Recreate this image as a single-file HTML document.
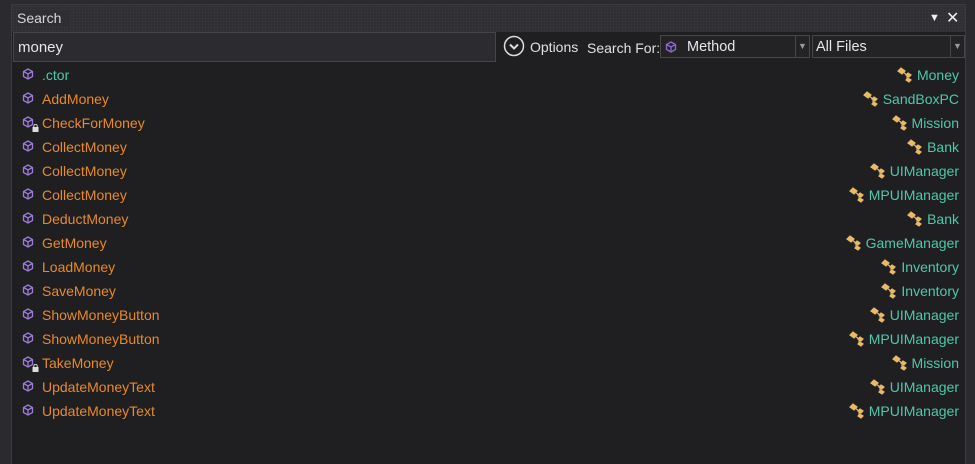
<!DOCTYPE html>
<html><head><meta charset="utf-8"><style>
*{margin:0;padding:0;box-sizing:border-box}
body{width:975px;height:456px;background:#2b2b2f;font-family:"Liberation Sans",sans-serif;position:relative;overflow:hidden}
#panel{position:absolute;left:11px;top:4px;width:955px;height:460px;background:#1f1f22;border:1px solid #3a3a3f;border-bottom:none}
#title{position:absolute;left:0;top:0;width:953px;height:27px;background:#2e2e33;
background-image:radial-gradient(#36363b 0.8px,transparent 0.9px);background-size:3px 3px}
#title span{position:absolute;left:5px;top:5px;color:#d8d8d8;font-size:14px;background:#2e2e33;padding-right:8px}
#title .ctl{position:absolute;top:3px;color:#eee;font-size:16px}
#search{position:absolute;left:1px;top:27px;width:483px;height:30px;background:#2c2c30;border:1px solid #45454a;color:#e6e6e6;font-size:15px;padding:6px 4px}
.lbl{position:absolute;color:#e0e0e0;font-size:14px}
.combo{position:absolute;top:30px;height:23px;background:#232326;border:1px solid #46464b;color:#e6e6e6;font-size:14.5px}
.combo .arr{position:absolute;right:0;top:0;width:14px;height:21px;border-left:1px solid #46464b;color:#999;font-size:9px;text-align:center;line-height:21px}
.row{position:absolute;left:0;width:953px;height:24px;font-size:14px}
.row .n{position:absolute;left:30px;top:4px;color:#e8892a}
.row .c{position:absolute;right:6px;top:4px;color:#4ec9a8}
.row .mi{position:absolute;left:10px;top:5px}
.row .ci{position:absolute;top:4px}
</style></head><body>
<div id="panel">
<div id="title"><span>Search</span><div class="ctl" style="left:917px;font-size:11px;top:7px">▼</div><div class="ctl" style="left:934px">✕</div></div>
<div id="search">money</div>
<svg style="position:absolute;left:491px;top:30px" width="22" height="22"><circle cx="11" cy="11" r="9.5" fill="none" stroke="#ddd" stroke-width="1.5"/><path d="M7 9.5l4 4 4-4" fill="none" stroke="#ddd" stroke-width="2"/></svg>
<div class="lbl" style="left:518px;top:34px">Options</div>
<div class="lbl" style="left:575px;top:35px">Search For:</div>
<div class="combo" style="left:648px;width:150px"><svg style="position:absolute;left:4px;top:5px" width="12" height="12"><path d="M6 1l4.5 2.5v5L6 11 1.5 8.5v-5z M1.5 3.5L6 6l4.5-2.5M6 6v5" fill="none" stroke="#8e6bd0" stroke-width="1.3"/></svg><span style="position:absolute;left:26px;top:3px">Method</span><div class="arr">▼</div></div>
<div class="combo" style="left:800px;width:153px"><span style="position:absolute;left:3px;top:3px">All Files</span><div class="arr">▼</div></div>
<div id="rows"></div>
</div>
<script>
var d=[[".ctor","Money",0],["AddMoney","SandBoxPC",0],["CheckForMoney","Mission",1],["CollectMoney","Bank",0],["CollectMoney","UIManager",0],["CollectMoney","MPUIManager",0],["DeductMoney","Bank",0],["GetMoney","GameManager",0],["LoadMoney","Inventory",0],["SaveMoney","Inventory",0],["ShowMoneyButton","UIManager",0],["ShowMoneyButton","MPUIManager",0],["TakeMoney","Mission",1],["UpdateMoneyText","UIManager",0],["UpdateMoneyText","MPUIManager",0]];
var h="";
var cv=document.createElement("canvas").getContext("2d");cv.font="14px 'Liberation Sans'";
d.forEach(function(r,i){
var w=cv.measureText(r[1]).width;
var mi='<svg class="mi" width="12" height="12"><path d="M6 1l4.5 2.5v5L6 11 1.5 8.5v-5z M1.5 3.5L6 6l4.5-2.5M6 6v5" fill="none" stroke="#9b7bd8" stroke-width="1.3"/></svg>';
if(r[2])mi+='<svg style="position:absolute;left:20px;top:13px" width="7" height="8"><rect x="0.5" y="3" width="6" height="5" fill="#ddd"/><path d="M1.8 3.5V2a1.7 1.7 0 0 1 3.4 0v1.5" fill="none" stroke="#ddd"/></svg>';
var ci='<svg class="ci" style="right:'+(w+8)+'px" width="18" height="16"><path d="M1 4l3-3 4 3-3 3z M9 8l2-2 3 2-2 2z M9 13l2-2 3 2-2 2z M6 5l4 3M10 9v3" fill="#e8b96a" stroke="#e8b96a" stroke-width="1.2"/></svg>';
h+='<div class="row" style="top:'+(58+i*24)+'px">'+mi+'<span class="n"'+(i==0?' style="color:#4ec9a8"':'')+'>'+r[0]+'</span>'+ci+'<span class="c">'+r[1]+'</span></div>';
});
document.getElementById("rows").innerHTML=h;
</script>
</body></html>
